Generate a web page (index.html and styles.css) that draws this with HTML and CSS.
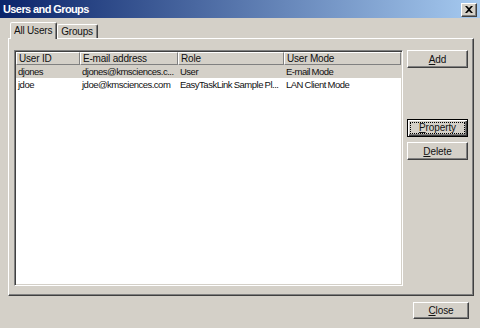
FILE: index.html
```html
<!DOCTYPE html>
<html>
<head>
<meta charset="utf-8">
<link rel="stylesheet" href="styles.css">
</head>
<body>
<div class="window">
  <div class="titlebar">
    <span class="title">Users and Groups</span>
    <span class="closebox"><svg width="8" height="7" viewBox="0 0 8 7"><path d="M0 0h2l2 2 2-2h2L5 3.5 8 7H6L4 5 2 7H0l3-3.5z" fill="#000"/></svg></span>
  </div>
  <div class="content">
    <div class="tabs">
      <div class="tab active">All Users</div>
      <div class="tab">Groups</div>
    </div>
    <div class="panel">
      <div class="listview">
        <div class="lv-header">
          <div class="hcell c1">User ID</div>
          <div class="hcell c2">E-mail address</div>
          <div class="hcell c3">Role</div>
          <div class="hcell c4">User Mode</div>
        </div>
        <div class="lv-row selected">
          <div class="cell c1">djones</div>
          <div class="cell c2">djones@kmsciences.c...</div>
          <div class="cell c3">User</div>
          <div class="cell c4">E-mail Mode</div>
        </div>
        <div class="lv-row">
          <div class="cell c1">jdoe</div>
          <div class="cell c2">jdoe@kmsciences.com</div>
          <div class="cell c3">EasyTaskLink Sample Pl...</div>
          <div class="cell c4">LAN Client Mode</div>
        </div>
      </div>
      <div class="buttons">
        <button class="btn"><u>A</u>dd</button>
        <button class="btn default gap-top"><span class="focus"><u>P</u>roperty</span></button>
        <button class="btn"><u>D</u>elete</button>
      </div>
    </div>
    <div class="footer">
      <button class="btn close"><u>C</u>lose</button>
    </div>
  </div>
</div>
</body>
</html>
```

FILE: styles.css
```css
html, body {
  margin: 0;
  padding: 0;
  width: 480px;
  height: 328px;
  overflow: hidden;
  background: #d4d0c8;
}
.window {
  width: 480px;
  height: 328px;
  background: #d4d0c8;
  font-family: "Liberation Sans", Arial, sans-serif;
  font-size: 10px;
  letter-spacing: -0.2px;
  color: #111;
  display: flex;
  flex-direction: column;
}
.titlebar {
  height: 18px;
  background: linear-gradient(to right, #0a246a, #a6caf0);
  display: flex;
  align-items: center;
  justify-content: space-between;
  padding: 0 3px 0 3px;
}
.title {
  color: #fff;
  font-weight: bold;
  font-size: 11px;
  letter-spacing: -0.6px;
}
.closebox {
  width: 16px;
  height: 14px;
  box-sizing: border-box;
  background: #d4d0c8;
  border: 1px solid;
  border-color: #fff #404040 #404040 #fff;
  box-shadow: inset -1px -1px 0 #808080;
  display: flex;
  align-items: center;
  justify-content: center;
  margin-top: 1px;
}
.content {
  flex: 1;
  display: flex;
  flex-direction: column;
  padding: 5px 6px 0 8px;
}
.tabs {
  display: flex;
  align-items: flex-end;
  height: 15px;
  padding-left: 4px;
  position: relative;
  z-index: 1;
}
.tab {
  height: 13px;
  line-height: 13px;
  padding: 0 4px 0 3px;
  border: 1px solid;
  border-bottom: none;
  border-color: #fff #404040 transparent #fff;
  box-shadow: inset -1px 0 0 #808080;
  border-radius: 2px 2px 0 0;
}
.tab.active {
  height: 16px;
  line-height: 16px;
  margin-bottom: -1px;
  background: #d4d0c8;
  padding: 0 4px 0 3px;
  margin-left: -2px;
}
.panel {
  height: 258px;
  box-sizing: border-box;
  border: 1px solid;
  border-color: #fff #404040 #404040 #fff;
  box-shadow: inset -1px -1px 0 #808080;
  display: flex;
  padding: 11px 6px 11px 5px;
  gap: 4px;
}
.listview {
  width: 389px;
  height: 236px;
  box-sizing: border-box;
  background: #fff;
  border: 1px solid;
  border-color: #808080 #fff #fff #808080;
  box-shadow: inset 1px 1px 0 #404040, inset -1px -1px 0 #d4d0c8;
  padding: 1px;
}
.lv-header {
  display: flex;
  height: 13px;
}
.hcell {
  box-sizing: border-box;
  height: 13px;
  line-height: 12px;
  padding-left: 2px;
  background: #d4d0c8;
  border: 1px solid;
  border-color: #fff #808080 #808080 #fff;
  white-space: nowrap;
  overflow: hidden;
}
.c1 { width: 64px; }
.c2 { width: 98px; }
.c3 { width: 106px; }
.c4 { width: 117px; }
.lv-row {
  display: flex;
  height: 13px;
  line-height: 13px;
}
.lv-row.selected {
  background: #d4d0c8;
}
.cell {
  box-sizing: border-box;
  padding-left: 2px;
  white-space: nowrap;
  overflow: hidden;
  font-size: 9.5px;
  letter-spacing: -0.5px;
  word-spacing: -0.5px;
}
.buttons {
  display: flex;
  flex-direction: column;
  gap: 5px;
}
.btn {
  font-family: "Liberation Sans", Arial, sans-serif;
  font-size: 10px;
  letter-spacing: -0.1px;
  color: #111;
  width: 61px;
  height: 18px;
  padding: 0;
  box-sizing: border-box;
  background: #d4d0c8;
  border: 1px solid;
  border-color: #fff #404040 #404040 #fff;
  box-shadow: inset -1px -1px 0 #808080;
  display: flex;
  align-items: center;
  justify-content: center;
}
.btn.gap-top {
  margin-top: 46px;
}
.btn.default {
  border: 1px solid #000;
  box-shadow: inset 1px 1px 0 #fff, inset -1px -1px 0 #404040, inset -2px -2px 0 #808080;
}
.focus {
  border: 1px dotted #000;
  width: 55px;
  height: 12px;
  line-height: 10px;
  box-sizing: border-box;
  text-align: center;
}
.footer {
  display: flex;
  justify-content: flex-end;
  padding: 6px 5px 0 0;
}
.btn.close {
  width: 56px;
  height: 17px;
}
```
